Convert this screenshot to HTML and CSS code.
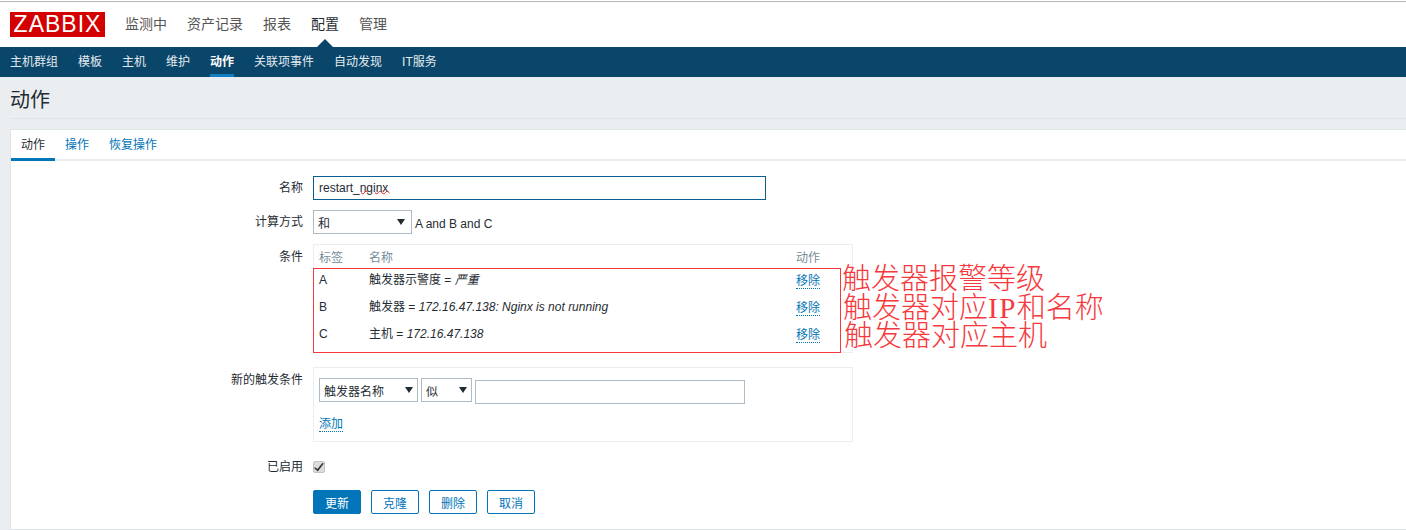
FILE: index.html
```html
<!DOCTYPE html>
<html lang="zh">
<head>
  <meta charset="UTF-8">
  <title>动作</title>
  <link rel="stylesheet" href="styles.css">
</head>
<body>
  <header class="top-nav">
    <a class="logo">ZABBIX</a>
    <ul class="top-menu">
      <li>监测中</li>
      <li>资产记录</li>
      <li>报表</li>
      <li class="selected">配置</li>
      <li>管理</li>
    </ul>
  </header>
  <nav class="sub-nav">
    <ul class="sub-menu">
      <li>主机群组</li>
      <li>模板</li>
      <li>主机</li>
      <li>维护</li>
      <li class="selected">动作</li>
      <li>关联项事件</li>
      <li>自动发现</li>
      <li>IT服务</li>
    </ul>
  </nav>
  <main class="page">
    <h1 class="page-title">动作</h1>
    <section class="card">
      <ul class="tabs">
        <li class="selected">动作</li>
        <li>操作</li>
        <li>恢复操作</li>
      </ul>
      <form class="form">
        <label class="form-label label-name">名称</label>
        <div class="form-field"><input class="text-input name-input" type="text" value="restart_nginx"><span class="spell">nginx</span></div>

        <label class="form-label label-calc">计算方式</label>
        <div class="form-field calc-row">
          <div class="select select-calc">和<i class="arrow"></i></div>
          <span class="calc-text">A and B and C</span>
        </div>

        <label class="form-label label-cond">条件</label>
        <div class="form-field">
          <div class="box cond-box">
            <div class="cond-row cond-head"><span class="col-a">标签</span><span class="col-b">名称</span><span class="col-c">动作</span></div>
            <div class="cond-row"><span class="col-a">A</span><span class="col-b">触发器示警度 = <em>严重</em></span><a class="col-c link">移除</a></div>
            <div class="cond-row"><span class="col-a">B</span><span class="col-b">触发器 = <em>172.16.47.138: Nginx is not running</em></span><a class="col-c link">移除</a></div>
            <div class="cond-row"><span class="col-a">C</span><span class="col-b">主机 = <em>172.16.47.138</em></span><a class="col-c link">移除</a></div>
            <div class="red-frame"></div>
            <div class="note note-1">触发器报警等级</div>
            <div class="note note-2">触发器对应<span class="serif">IP</span>和名称</div>
            <div class="note note-3">触发器对应主机</div>
          </div>
        </div>

        <label class="form-label label-new">新的触发条件</label>
        <div class="form-field">
          <div class="box new-box">
            <div class="new-row">
              <div class="select select-type">触发器名称<i class="arrow"></i></div>
              <div class="select select-op">似<i class="arrow"></i></div>
              <input class="text-input value-input" type="text">
            </div>
            <a class="link add-link">添加</a>
          </div>
        </div>

        <label class="form-label label-check">已启用</label>
        <div class="form-field"><span class="check"><svg width="10" height="10" viewBox="0 0 10 10"><path d="M0.5 5 L3.5 7 L8.5 0.8 L9.6 1.8 L3.8 9.6 L0.5 6.6 Z" fill="#2f3436"/></svg></span></div>

        <div class="form-field buttons">
          <button type="button" class="btn primary">更新</button>
          <button type="button" class="btn">克隆</button>
          <button type="button" class="btn">删除</button>
          <button type="button" class="btn">取消</button>
        </div>
      </form>
    </section>
  </main>
</body>
</html>
```

FILE: styles.css
```css
*{
  box-sizing: border-box;
}
html,body{
  margin: 0;
  padding: 0;
  height: 530px;
  overflow: hidden;
}
body{
  background-color: #ebeef0;
  font-family: "Liberation Sans", "Noto Sans CJK SC", sans-serif;
  font-size: 12px;
  color: #1f2c33;
}
ul{
  margin: 0;
  padding: 0;
  list-style-type: none;
  display: flex;
}

/* top */
.top-nav{
  position: relative;
  height: 47px;
  background-color: #fff;
  display: flex;
  align-items: flex-start;
  padding: 12px 0 0 10px;
}
.top-nav::before{
  content: "";
  position: absolute;
  left: 0;
  right: 0;
  top: 1px;
  height: 1px;
  background-color: #b5b5b5;
}
.logo{
  width: 95px;
  height: 25px;
  background-color: #d40000;
  color: #fff;
  font-size: 23px;
  line-height: 25px;
  text-align: center;
  letter-spacing: 1px;
}
.top-menu{
  margin-left: 20px;
  gap: 20px;
  font-size: 14px;
  line-height: 25px;
  color: #555;
}
.top-menu .selected{
  color: #1f2c33;
  position: relative;
}
.top-menu .selected::after{
  content: "";
  position: absolute;
  left: 6px;
  top: 27px;
  border-left: 8px solid transparent;
  border-right: 8px solid transparent;
  border-bottom: 8px solid #0a466a;
}
.sub-nav{
  height: 30px;
  background-color: #0a466a;
  padding-left: 10px;
}
.sub-menu{
  gap: 20px;
  color: #e4ebef;
  line-height: 30px;
}
.sub-menu li{
  height: 30px;
}
.sub-menu .selected{
  color: #fff;
  font-weight: bold;
  border-bottom: 3px solid #0f7fc0;
}

/* page */
.page{
  padding-left: 10px;
}
.page-title{
  margin: 0;
  height: 42px;
  font-size: 20px;
  font-weight: normal;
  line-height: 46px;
  color: #1f2c33;
  border-bottom: 1px solid #dfe4e7;
}
.card{
  margin-top: 10px;
  height: 401px;
  background-color: #fff;
  border: 1px solid #dfe4e7;
  border-right: 0;
}
.tabs{
  height: 31px;
  border-bottom: 2px solid #ebeef0;
  color: #0275b8;
}
.tabs li{
  height: 31px;
  padding: 0 10px;
  line-height: 31px;
}
.tabs .selected{
  color: #1f2c33;
  border-bottom: 3px solid #0275b8;
}

/* form */
.form{
  display: grid;
  grid-template-columns: 292px 1fr;
  column-gap: 10px;
  row-gap: 10px;
  padding-top: 15px;
}
.form-label{
  text-align: right;
  line-height: 20px;
}
.label-name{
  margin-top: 2px;
}
.label-calc{
  margin-top: 2px;
}
.label-cond{
  margin-top: 3px;
}
.label-new{
  margin-top: 7px;
}
.label-check{
  margin-top: 5px;
}
.form-field{
  grid-column: 2;
  position: relative;
}
.text-input{
  display: block;
  height: 24px;
  padding: 0 5px;
  border: 1px solid #acbbc4;
  font: inherit;
  color: #1f2c33;
  outline: none;
}
.name-input{
  width: 453px;
  border-color: #0a5d8f;
}
.spell{
  position: absolute;
  left: 48px;
  top: 1px;
  line-height: 17px;
  color: transparent;
  text-decoration: underline wavy #e02020 1px;
}
.calc-row{
  display: flex;
  align-items: center;
  gap: 3px;
}
.calc-text{
  padding-top: 3px;
}
.select{
  position: relative;
  height: 24px;
  border: 1px solid #acbbc4;
  background-color: #fff;
  padding-left: 4px;
  line-height: 26px;
}
.arrow{
  position: absolute;
  right: 4px;
  top: 8px;
  border-left: 4px solid transparent;
  border-right: 4px solid transparent;
  border-top: 6px solid #1f2c33;
}
.select-calc{
  width: 99px;
}
.select-calc .arrow{
  right: 6px;
}
.select-type{
  width: 99px;
}
.select-op{
  width: 51px;
}
.box{
  position: relative;
  width: 540px;
  border: 1px solid #ebeef0;
  padding: 0 5px;
}
.cond-box{
  height: 109px;
}
.cond-row{
  height: 27px;
  line-height: 27px;
  display: flex;
}
.cond-head{
  height: 22px;
  line-height: 26px;
  color: #768d99;
}
.col-a{
  width: 50px;
}
.col-b{
  width: 427px;
}
.link{
  color: #0275b8;
  border-bottom: 1px dotted #0275b8;
  line-height: 18px;
  height: 17px;
  align-self: center;
}
.cond-row .link{
  width: 24px;
}
em{
  font-style: italic;
}

/* red marks over the table */
.red-frame{
  position: absolute;
  left: -1px;
  top: 23px;
  width: 528px;
  height: 85px;
  border: 1px solid #f6393c;
}
.note{
  position: absolute;
  font-size: 29px;
  line-height: 28px;
  height: 28px;
  font-weight: 300;
  color: #f6393c;
  white-space: nowrap;
}
.note-1{
  left: 528px;
  top: 20px;
}
.note-2{
  left: 529px;
  top: 49px;
}
.note-3{
  left: 530px;
  top: 77px;
}
.serif{
  font-family: "Liberation Serif", serif;
  letter-spacing: 1.5px;
  line-height: 20px;
}
.new-box{
  height: 75px;
  margin-top: 4px;
  padding-top: 10px;
}
.new-row{
  display: flex;
  align-items: flex-start;
  gap: 3px;
  margin-bottom: 11px;
}
.value-input{
  width: 270px;
  margin-top: 2px;
}
.add-link{
  display: inline-block;
}
.check{
  display: block;
  width: 12px;
  height: 12px;
  margin-top: 9px;
  border: 1px solid #c4c4c4;
  border-radius: 2px;
  background-color: #dcdcdc;
}
.check svg{
  display: block;
}
.buttons{
  display: flex;
  gap: 10px;
  margin-top: 3px;
}
.btn{
  width: 48px;
  height: 24px;
  padding: 0;
  background-color: #fff;
  border: 1px solid #0275b8;
  border-radius: 2px;
  color: #0275b8;
  font: inherit;
}
.primary{
  background-color: #0275b8;
  color: #fff;
}
```
